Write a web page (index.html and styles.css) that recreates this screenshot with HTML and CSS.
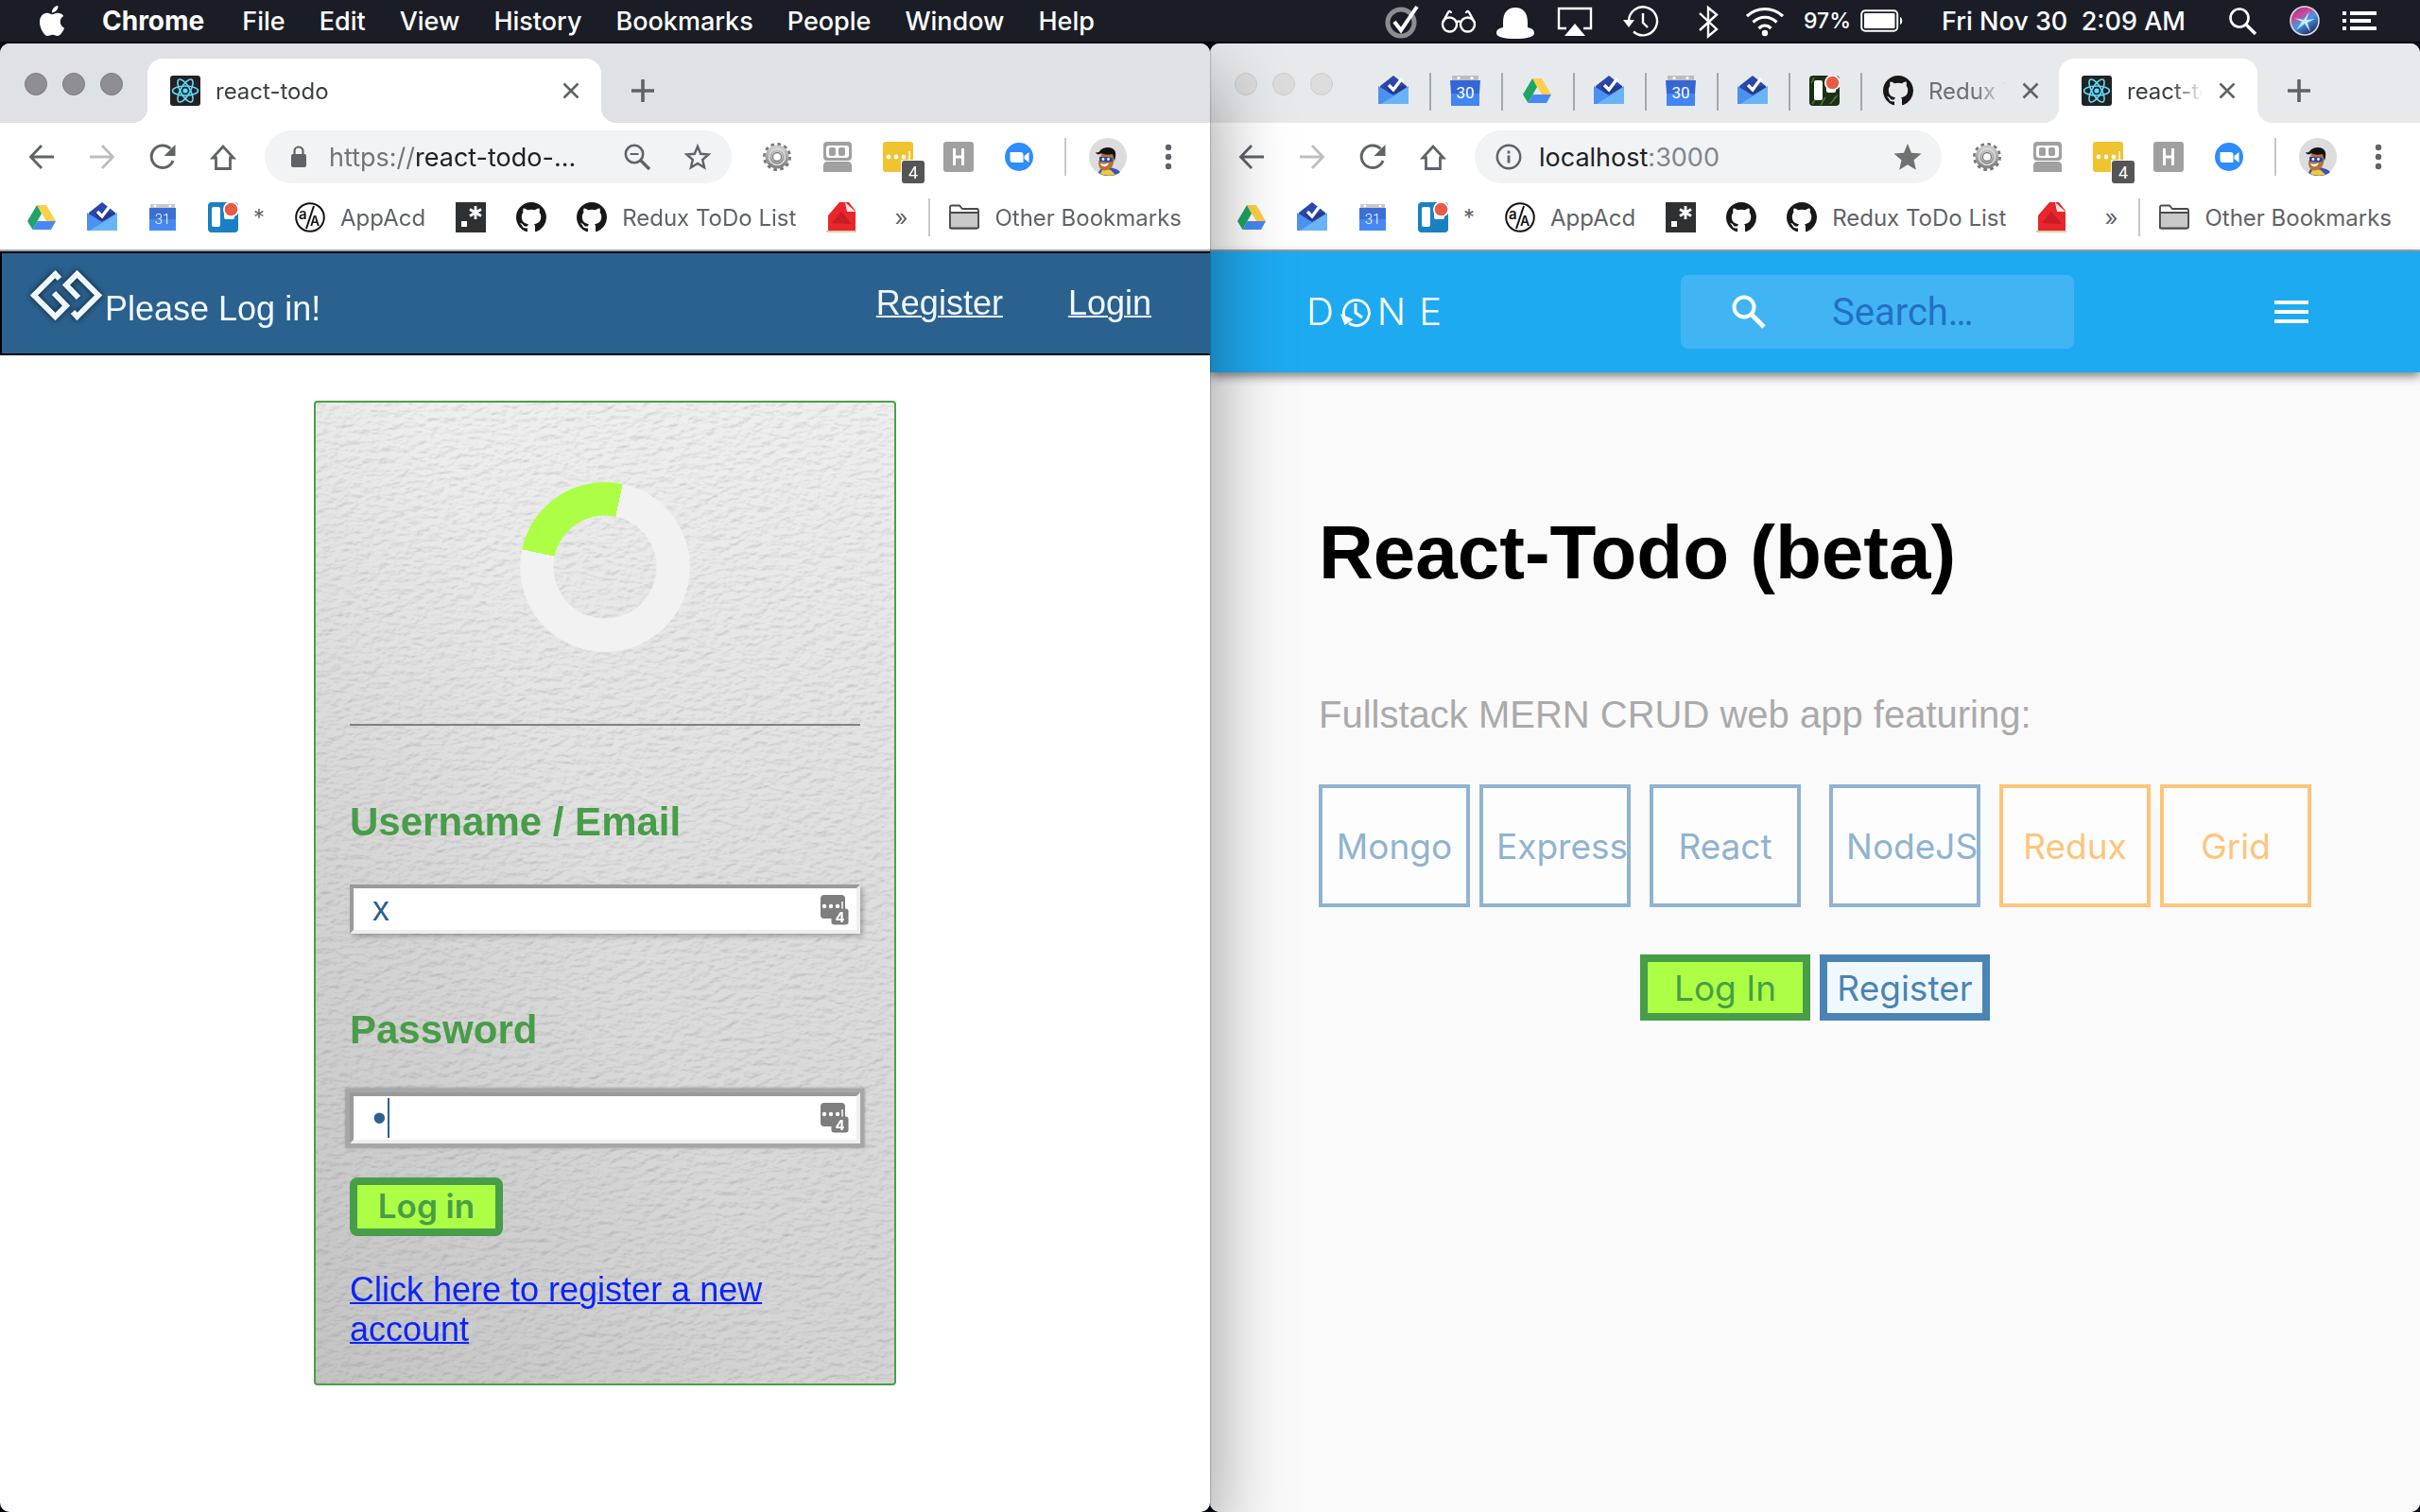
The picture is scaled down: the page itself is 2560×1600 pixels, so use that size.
FILE: index.html
```html
<!DOCTYPE html>
<html lang="en">
<head>
<meta charset="utf-8">
<title>react-todo</title>
<link rel="stylesheet" href="styles.css">
</head>
<body>
<svg class="sprite" aria-hidden="true">
  <defs>
    <filter id="paper" x="0" y="0" width="100%" height="100%">
      <feTurbulence type="fractalNoise" baseFrequency="0.09 0.16" numOctaves="4" seed="7" result="n"/>
      <feDiffuseLighting in="n" surfaceScale="0.9" diffuseConstant="1.18" lighting-color="#fff">
        <feDistantLight azimuth="240" elevation="56"/>
      </feDiffuseLighting>
    </filter>
    <linearGradient id="siri-g" x1="0" y1="0" x2="0.6" y2="1">
      <stop offset="0" stop-color="#5b3fa8"/><stop offset=".35" stop-color="#d8408f"/><stop offset=".6" stop-color="#3f9be8"/><stop offset="1" stop-color="#2b2f6b"/>
    </linearGradient>
    <linearGradient id="gear-g" x1="0" y1="0" x2="0" y2="1"><stop offset="0" stop-color="#c9c9c9"/><stop offset="1" stop-color="#858585"/></linearGradient>
  </defs>
</svg>
<svg class="symbols" aria-hidden="true">
  <symbol id="apple" viewBox="0 0 24 24"><path fill="#fff" d="M12.152 6.896c-.948 0-2.415-1.078-3.96-1.04-2.04.027-3.91 1.183-4.961 3.014-2.117 3.675-.546 9.103 1.519 12.09 1.013 1.454 2.208 3.09 3.792 3.039 1.52-.065 2.09-.987 3.935-.987 1.831 0 2.35.987 3.96.948 1.637-.026 2.676-1.48 3.676-2.948 1.156-1.688 1.636-3.325 1.662-3.415-.039-.013-3.182-1.221-3.22-4.857-.026-3.04 2.48-4.494 2.597-4.559-1.429-2.09-3.623-2.324-4.39-2.376-2-.156-3.675 1.09-4.61 1.09zM15.53 3.83c.843-1.012 1.4-2.427 1.245-3.83-1.207.052-2.662.805-3.532 1.818-.78.896-1.454 2.338-1.273 3.714 1.338.104 2.715-.688 3.559-1.701"/></symbol>
  <symbol id="github" viewBox="0 0 16 16"><path fill="#191717" d="M8 0C3.58 0 0 3.58 0 8c0 3.54 2.29 6.53 5.47 7.59.4.07.55-.17.55-.38 0-.19-.01-.82-.01-1.49-2.01.37-2.53-.49-2.69-.94-.09-.23-.48-.94-.82-1.13-.28-.15-.68-.52-.01-.53.63-.01 1.08.58 1.23.82.72 1.21 1.87.87 2.33.66.07-.52.28-.87.51-1.07-1.78-.2-3.64-.89-3.64-3.95 0-.87.31-1.59.82-2.15-.08-.2-.36-1.02.08-2.12 0 0 .67-.21 2.2.82.64-.18 1.32-.27 2-.27.68 0 1.36.09 2 .27 1.53-1.04 2.2-.82 2.2-.82.44 1.1.16 1.92.08 2.12.51.56.82 1.27.82 2.15 0 3.07-1.87 3.75-3.65 3.95.29.25.54.73.54 1.48 0 1.07-.01 1.93-.01 2.2 0 .21.15.46.55.38A8.013 8.013 0 0016 8c0-4.42-3.58-8-8-8z"/></symbol>
  <symbol id="react" viewBox="0 0 32 32"><rect width="32" height="32" rx="3" fill="#222"/><g fill="none" stroke="#61dafb" stroke-width="1.6"><ellipse cx="16" cy="16" rx="13.5" ry="5"/><ellipse cx="16" cy="16" rx="13.5" ry="5" transform="rotate(60 16 16)"/><ellipse cx="16" cy="16" rx="13.5" ry="5" transform="rotate(120 16 16)"/></g><circle cx="16" cy="16" r="2.6" fill="#61dafb"/></symbol>
  <symbol id="drive" viewBox="0 0 32 32"><path fill="#ffcf48" d="M11 3h10l10 17H21z"/><path fill="#1fa463" d="M11 3l5 9-9.500 17L1 20z"/><path fill="#4688f4" d="M31 20l-5 9H6.500l5-9z"/></symbol>
  <symbol id="inbox" viewBox="0 0 32 32"><path fill="#2a47ae" d="M16 0l14 11v12H2V11z"/><path fill="#253a8e" d="M8 11h22v8H12z"/><path fill="#4b92f0" d="M0 11l16 10 16-10v19H0z"/><path fill="#69b4f5" d="M32 12v18H3z"/><path d="M11 10l5 5 9-12" fill="none" stroke="#fff" stroke-width="3.400"/></symbol>
  <symbol id="cal31" viewBox="0 0 32 32"><rect x="3" y="2" width="26" height="6" fill="#c8c8c8"/><path fill="#3b6fd4" d="M2 6h28v12H2z"/><path fill="#4688f1" d="M2 18h28v12H2z"/><circle cx="8" cy="4" r="1.300" fill="#fff"/><circle cx="24" cy="4" r="1.300" fill="#fff"/><text x="16" y="23" font-family="Roboto" font-weight="300" font-size="15" fill="#fff" text-anchor="middle">31</text></symbol>
  <symbol id="cal30" viewBox="0 0 32 32"><rect x="2" y="0" width="28" height="8" fill="#bdbdbd"/><path fill="#3367d6" d="M0 5h32l-1 14v12H1V19z"/><path fill="#4285f4" d="M1 19h30v13H1z"/><circle cx="9" cy="2.500" r="1.500" fill="#fff"/><circle cx="23" cy="2.500" r="1.500" fill="#fff"/><text x="16" y="24" font-family="Roboto" font-size="17" fill="#fff" text-anchor="middle">30</text></symbol>
  <symbol id="trello" viewBox="0 0 32 32"><rect width="32" height="32" rx="4" fill="#1a80c4"/><rect x="4" y="5" width="9" height="21" rx="2" fill="#fff"/><rect x="17" y="5" width="11" height="13" rx="2" fill="#fff"/><circle cx="24.500" cy="7.500" r="8.500" fill="#fff"/><circle cx="24.500" cy="7.500" r="6.800" fill="#eb5a46"/></symbol>
  <symbol id="trello-dark" viewBox="0 0 32 32"><rect width="32" height="32" rx="4" fill="#1d2f16"/><path d="M3 30l4-6M12 31l5-8M22 30l6-7M26 24l4-3M2 8l3-6" stroke="#4d7434" stroke-width="1.500"/><rect x="5" y="5" width="9" height="21" rx="2" fill="#fff"/><rect x="18" y="5" width="10" height="13" rx="2" fill="#fff"/><circle cx="24.500" cy="7.500" r="8.500" fill="#fff"/><circle cx="24.500" cy="7.500" r="6.800" fill="#eb5a46"/></symbol>
  <symbol id="appacd" viewBox="0 0 32 32"><circle cx="16" cy="16" r="14.800" fill="#fff" stroke="#111" stroke-width="2"/><path d="M20 4l-8 24" stroke="#111" stroke-width="2"/><text x="4" y="18" font-family="Inter" font-weight="600" font-size="15" fill="#111">a</text><text x="16" y="25" font-family="Inter" font-weight="600" font-size="14" fill="#111">A</text></symbol>
  <symbol id="regex" viewBox="0 0 32 32"><rect width="32" height="32" fill="#2d3134"/><rect x="6" y="20" width="6" height="6" fill="#fff"/><path d="M21 4v14M15 7.500l12 7M27 7.500l-12 7" stroke="#fff" stroke-width="2.800"/></symbol>
  <symbol id="redroof" viewBox="0 0 32 32"><path fill="#e8262b" d="M2 14L14 0h10l7 9v21H2z"/><path fill="#c81d22" d="M6 22l10-12 11 13z"/><path fill="#fbe9e7" d="M20 0l11 10h-9z"/><path fill="#dccfa0" d="M0 30h32v2H0z"/></symbol>
  <symbol id="folder" viewBox="0 0 32 32"><path d="M1 28V5c0-1 .5-1.500 1.500-1.500H11l3 3.500h15.500c1 0 1.500.5 1.500 1.500V26c0 1-.5 1.500-1.500 1.500h-27C1.500 27.500 1 27 1 26" fill="#fff" stroke="#4a4a4a" stroke-width="1.800"/><path d="M1 11h30v15c0 1-.5 1.500-1.500 1.500h-27C1.500 27.500 1 27 1 26z" fill="#c8c8c8" stroke="#4a4a4a" stroke-width="1.800"/></symbol>
  <symbol id="back" viewBox="0 0 32 32"><path d="M29 16H5M16 4L4.500 16 16 28" fill="none" stroke="currentColor" stroke-width="2.800"/></symbol>
  <symbol id="forward" viewBox="0 0 32 32"><path d="M3 16h24M16 4l11.500 12L16 28" fill="none" stroke="currentColor" stroke-width="2.800"/></symbol>
  <symbol id="reload" viewBox="0 0 32 32"><path d="M27 20a11.800 11.800 0 1 1-2.500-12.500" fill="none" stroke="currentColor" stroke-width="3"/><path d="M29.500 3v12h-12z" fill="currentColor"/></symbol>
  <symbol id="home" viewBox="0 0 32 32"><path d="M16 5L5 17h3.500v11.500h15V17H27z" fill="none" stroke="currentColor" stroke-width="2.800"/></symbol>
  <symbol id="lock" viewBox="0 0 32 32"><rect x="8" y="13" width="16" height="14" rx="2" fill="currentColor"/><path d="M11.500 14v-4a4.500 4.500 0 0 1 9 0v4" fill="none" stroke="currentColor" stroke-width="2.200"/></symbol>
  <symbol id="info" viewBox="0 0 32 32"><circle cx="16" cy="16" r="12.200" fill="none" stroke="currentColor" stroke-width="2.500"/><path d="M16 14.500v8M16 9.500v3" stroke="currentColor" stroke-width="2.800"/></symbol>
  <symbol id="zoomout" viewBox="0 0 32 32"><circle cx="13" cy="13" r="9.200" fill="none" stroke="currentColor" stroke-width="2.600"/><path d="M19.500 19.500L29 29" stroke="currentColor" stroke-width="3.400"/><path d="M8.500 13h9" stroke="currentColor" stroke-width="2"/></symbol>
  <symbol id="star" viewBox="0 0 32 32"><path d="M16 5l3.200 7.800 8.300.700-6.300 5.500 1.900 8.200L16 22.900l-7.100 4.300 1.900-8.200-6.300-5.500 8.300-.7z" fill="none" stroke="currentColor" stroke-width="2.400"/></symbol>
  <symbol id="star-on" viewBox="0 0 32 32"><path d="M16 2l4 9.700 10.500.900-8 6.900 2.400 10.200L16 24.300l-8.900 5.400 2.400-10.200-8-6.900L12 11.700z" fill="#717171"/></symbol>
  <symbol id="gear" viewBox="0 0 32 32"><circle cx="16" cy="16" r="12.700" fill="none" stroke="#777" stroke-width="4.500" stroke-dasharray="3.400 3.250"/><circle cx="16" cy="16" r="9" fill="none" stroke="url(#gear-g)" stroke-width="7"/><circle cx="16" cy="16" r="8.500" fill="none" stroke="#ddd" stroke-width="1.500"/><circle cx="16" cy="16" r="4.500" fill="#fff" stroke="#777" stroke-width="1.300"/></symbol>
  <symbol id="robot" viewBox="0 0 32 32"><rect x="1" width="30" height="20" rx="4" fill="#a0a0a0"/><rect x="4" y="4" width="24" height="13" rx="3" fill="#fff"/><rect x="7" y="6" width="7" height="9" rx="2" fill="#a0a0a0"/><rect x="17" y="6" width="7" height="9" rx="2" fill="#a0a0a0"/><path d="M1 32v-7c0-2 1.500-4 4-4h22c2.500 0 4 2 4 4v7z" fill="#a0a0a0"/></symbol>
  <symbol id="keeper" viewBox="0 0 48 44"><rect width="32" height="32" rx="3" fill="#f0c330"/><circle cx="6" cy="16" r="2.400" fill="#fff"/><circle cx="14" cy="16" r="2.400" fill="#fff"/><circle cx="22" cy="16" r="2.400" fill="#fff"/><path d="M28 10v11" stroke="#fff" stroke-width="1.500"/><path d="M19 32V19h13v13z" fill="#fff" opacity=".9"/><rect x="20" y="20" width="24" height="24" rx="3" fill="#555"/><text x="32" y="39" font-family="Roboto" font-size="18" fill="#fff" text-anchor="middle">4</text></symbol>
  <symbol id="keeper-field" viewBox="0 0 30 32"><rect width="26" height="25" rx="4" fill="#7d7d7d"/><circle cx="4" cy="12" r="2.200" fill="#fff"/><circle cx="11" cy="12" r="2.200" fill="#fff"/><circle cx="18" cy="12" r="2.200" fill="#fff"/><path d="M23 7v9" stroke="#fff" stroke-width="1.500"/><rect x="11.500" y="14.500" width="18" height="17" rx="3" fill="#7d7d7d"/><text x="20.500" y="29" font-family="Inter" font-weight="700" font-size="15" fill="#fff" text-anchor="middle">4</text></symbol>
  <symbol id="hbox" viewBox="0 0 32 32"><rect width="32" height="32" rx="3" fill="#a0a0a0"/><path d="M11.500 7v18M20.500 7v18M11.500 16h9" stroke="#fff" stroke-width="3"/></symbol>
  <symbol id="zoomus" viewBox="0 0 32 32"><circle cx="16" cy="16" r="15" fill="#2d8cff"/><path fill="#fff" d="M6.500 11h11a3 3 0 0 1 3 3v8h-11a3 3 0 0 1-3-3zM21.500 15l5-4v11l-5-4z"/></symbol>
  <symbol id="avatar" viewBox="0 0 40 40"><circle cx="20" cy="20" r="20" fill="#dcdcdc"/><path d="M10 37c1-4 4-6 9-6s12 2 14 5c-5 5-16 6-23 1z" fill="#3a55b8"/><path d="M12 38l3-6 8 2 5 5c-5 1-11 1-16-1z" fill="#f0c83c"/><path d="M13 15c1-3 5-4 9-3s6 4 5 9-1 11-8 13-9-4-9-8c0-2 1-3 2-4z" fill="#b87333"/><path d="M7 15c2 1 4 0 5-2 4-4 12-4 15 0 2 3 1 8 0 11l-2-7c-4 1-9 1-12-1-2 2-5 2-6-1z" fill="#111"/><path d="M11 20c5 0 10 0 14 1v4c-5 1-10 0-14 0z" fill="#2747b0"/><circle cx="15" cy="22.500" r="1.400" fill="#fff"/><circle cx="20.500" cy="22.500" r="1.400" fill="#fff"/><path d="M12 27c3 1 6 1 9-1-1 5-7 6-9 1z" fill="#fff"/></symbol>
  <symbol id="dots" viewBox="0 0 32 32"><g fill="currentColor"><circle cx="16" cy="6" r="3.200"/><circle cx="16" cy="16" r="3.200"/><circle cx="16" cy="26" r="3.200"/></g></symbol>
  <symbol id="cross" viewBox="0 0 20 20"><path d="M2.500 2.500l15 15M17.500 2.500l-15 15" stroke="currentColor" stroke-width="2.600"/></symbol>
  <symbol id="plus" viewBox="0 0 24 24"><path d="M12 0v24M0 12h24" stroke="currentColor" stroke-width="3.600"/></symbol>
</svg>

<header class="menubar">
  <nav class="menus" aria-label="Application menu">
    <svg class="apple"><use href="#apple"/></svg>
    <b>Chrome</b><span>File</span><span>Edit</span><span>View</span><span>History</span><span>Bookmarks</span><span>People</span><span>Window</span><span>Help</span>
  </nav>
  <div class="status">
    <svg class="st" viewBox="0 0 40 40"><circle cx="19" cy="22" r="14" fill="none" stroke="#8b8d93" stroke-width="5"/><path d="M12 21l7 9L36 5" fill="none" stroke="#fff" stroke-width="4"/></svg>
    <svg class="st" viewBox="0 0 40 40" fill="none" stroke="#fff" stroke-width="2.400"><circle cx="10.500" cy="24" r="7.500"/><circle cx="29.500" cy="24" r="7.500"/><path d="M17 22c2-2 4-2 6 0M3 22l6-11c1-2 3-1 3 1M37 22l-6-11c-1-2-3-1-3 1"/></svg>
    <svg class="st" viewBox="0 0 40 40" fill="#fff"><path d="M7 27V22C7 11 12 6 20 6s13 5 13 16v5c5 1 7 3 7 6 0 4-8 6-20 6S0 37 0 33c0-3 2-5 7-6z"/></svg>
    <svg class="st w46" viewBox="0 0 46 40"><path d="M14 28H6V7h34v21h-8" fill="none" stroke="#fff" stroke-width="2.400"/><path d="M23 23l11 13H12z" fill="#fff"/></svg>
    <svg class="st w58" viewBox="0 0 58 40"><path d="M14 20a15 15 0 1 1 5 11.500" fill="none" stroke="#fff" stroke-width="2.400"/><path d="M8 19h12l-6 8z" fill="#fff"/><path d="M29 12v10l5 5" fill="none" stroke="#fff" stroke-width="2.400"/></svg>
    <svg class="st" viewBox="0 0 40 40"><path d="M11 12l18 17-9 7.500V6l9 7.500L11 30" fill="none" stroke="#fff" stroke-width="2.400"/></svg>
    <svg class="st" viewBox="0 0 40 40" fill="none" stroke="#fff" stroke-width="3.200"><path d="M1 15c11-10 27-10 38 0M7.500 21.500c7-7 18-7 25 0M13.500 28c4-4 9-4 13 0"/><circle cx="20" cy="33" r="1.600" fill="#fff"/></svg>
    <span class="pct">97%</span>
    <svg class="battery" viewBox="0 0 46 24"><rect x="1.200" y="1.200" width="38" height="21.600" rx="4" fill="none" stroke="#fff" stroke-width="2"/><rect x="4" y="4" width="32.500" height="16" rx="1" fill="#fff"/><path d="M42 8c3 1 3 7 0 8z" fill="#fff"/></svg>
    <time class="clock">Fri Nov 30&nbsp; 2:09 AM</time>
    <svg class="spot" viewBox="0 0 30 30" fill="none" stroke="#fff"><circle cx="12" cy="12" r="9.500" stroke-width="2.600"/><path d="M18.500 18.500L29 29" stroke-width="3.400"/></svg>
    <svg class="siri" viewBox="0 0 32 32"><circle cx="16" cy="16" r="15" fill="url(#siri-g)" stroke="#ddd" stroke-width="1.600"/><path d="M5 13l10 2 6-9-3 9 9-1-8 4 3 10-6-9-9 7 6-9z" fill="#dff6ff" opacity=".85"/></svg>
    <svg class="list" viewBox="0 0 36 24" fill="#fff"><path d="M0 2h4v4H0zM0 10h4v4H0zM0 18h4v4H0zM8 2h28v4H8zM8 10h22v4H8zM8 18h28v4H8z"/></svg>
  </div>
</header>

<div class="desktop">
  <section class="window front" aria-label="react-todo">
    <div class="tabstrip">
      <div class="lights"><i></i><i></i><i></i></div>
      <div class="tab active wide">
        <svg class="ico"><use href="#react"/></svg><span class="title">react-todo</span>
        <button class="x" aria-label="Close tab"><svg><use href="#cross"/></svg></button>
      </div>
      <button class="newtab" aria-label="New tab"><svg><use href="#plus"/></svg></button>
    </div>
    <div class="toolbar">
      <button aria-label="Back"><svg class="ico"><use href="#back"/></svg></button>
      <button class="off" aria-label="Forward"><svg class="ico"><use href="#forward"/></svg></button>
      <button aria-label="Reload"><svg class="ico"><use href="#reload"/></svg></button>
      <button aria-label="Home"><svg class="ico"><use href="#home"/></svg></button>
      <div class="omnibox">
        <svg class="ico"><use href="#lock"/></svg>
        <span class="url"><span class="dim">https://</span>react-todo-...</span>
        <button aria-label="Zoom"><svg class="ico"><use href="#zoomout"/></svg></button>
        <button aria-label="Bookmark this page"><svg class="ico"><use href="#star"/></svg></button>
      </div>
      <button aria-label="Settings extension"><svg class="ico"><use href="#gear"/></svg></button>
      <button aria-label="Robot extension"><svg class="ico"><use href="#robot"/></svg></button>
      <button class="badged" aria-label="Passwords"><svg class="keeper"><use href="#keeper"/></svg></button>
      <button aria-label="H extension"><svg class="ico"><use href="#hbox"/></svg></button>
      <button aria-label="Zoom meetings"><svg class="ico"><use href="#zoomus"/></svg></button>
      <span class="rule"></span>
      <button aria-label="Profile"><svg class="face"><use href="#avatar"/></svg></button>
      <button aria-label="Menu"><svg class="ico"><use href="#dots"/></svg></button>
    </div>
    <nav class="bookmarks" aria-label="Bookmarks">
      <a href="#"><svg class="ico"><use href="#drive"/></svg></a>
      <a href="#"><svg class="ico"><use href="#inbox"/></svg></a>
      <a href="#"><svg class="ico"><use href="#cal31"/></svg></a>
      <a href="#"><svg class="ico"><use href="#trello"/></svg>*</a>
      <a href="#"><svg class="ico"><use href="#appacd"/></svg>AppAcd</a>
      <a href="#"><svg class="ico"><use href="#regex"/></svg></a>
      <a href="#"><svg class="ico"><use href="#github"/></svg></a>
      <a href="#"><svg class="ico"><use href="#github"/></svg>Redux ToDo List</a>
      <a href="#"><svg class="ico"><use href="#redroof"/></svg></a>
      <button class="more" aria-label="More bookmarks">»</button>
      <a class="other" href="#"><svg class="ico"><use href="#folder"/></svg>Other Bookmarks</a>
    </nav>
    <main class="page login-page">
      <header class="site-bar">
        <svg class="brand" viewBox="0 0 80 58" fill="none" stroke="#f0f8ff" stroke-width="6"><path d="M33 11l-4.500-5L6 28.500 28.500 51 40 39.500 27 26"/><path d="M47 46l4.500 5L74 28.500 51.500 6 40 17.500 53 31"/></svg>
        <span class="greeting">Please Log in!</span>
        <nav class="site-links"><a href="#">Register</a><a href="#">Login</a></nav>
      </header>
      <form class="card">
        <svg class="paper" aria-hidden="true"><rect width="100%" height="100%" filter="url(#paper)"/></svg>
        <div class="spinner" role="progressbar" aria-label="Loading"></div>
        <hr>
        <label for="user">Username / Email</label>
        <div class="field"><input id="user" type="text" value="x"><svg class="fill"><use href="#keeper-field"/></svg></div>
        <label for="pass">Password</label>
        <div class="field"><input id="pass" class="focused" type="password" value="a"><i class="caret"></i><svg class="fill"><use href="#keeper-field"/></svg></div>
        <button class="submit" type="button">Log in</button>
        <a class="signup" href="#">Click here to register a new account</a>
      </form>
    </main>
  </section>

  <section class="window back" aria-label="localhost:3000">
    <div class="tabstrip">
      <div class="lights"><i></i><i></i><i></i></div>
      <div class="pinned">
        <span><svg class="ico"><use href="#inbox"/></svg></span>
        <span><svg class="ico"><use href="#cal30"/></svg></span>
        <span><svg class="ico"><use href="#drive"/></svg></span>
        <span><svg class="ico"><use href="#inbox"/></svg></span>
        <span><svg class="ico"><use href="#cal30"/></svg></span>
        <span><svg class="ico"><use href="#inbox"/></svg></span>
        <span><svg class="ico"><use href="#trello-dark"/></svg></span>
      </div>
      <div class="tab idle">
        <svg class="ico"><use href="#github"/></svg><span class="title">Redux ToDo List</span>
        <button class="x" aria-label="Close tab"><svg><use href="#cross"/></svg></button>
      </div>
      <div class="tab active narrow">
        <svg class="ico"><use href="#react"/></svg><span class="title">react-todo</span>
        <button class="x" aria-label="Close tab"><svg><use href="#cross"/></svg></button>
      </div>
      <button class="newtab" aria-label="New tab"><svg><use href="#plus"/></svg></button>
    </div>
    <div class="toolbar">
      <button aria-label="Back"><svg class="ico"><use href="#back"/></svg></button>
      <button class="off" aria-label="Forward"><svg class="ico"><use href="#forward"/></svg></button>
      <button aria-label="Reload"><svg class="ico"><use href="#reload"/></svg></button>
      <button aria-label="Home"><svg class="ico"><use href="#home"/></svg></button>
      <div class="omnibox">
        <svg class="ico"><use href="#info"/></svg>
        <span class="url">localhost<span class="port">:3000</span></span>
        <button aria-label="Bookmarked"><svg class="ico"><use href="#star-on"/></svg></button>
      </div>
      <button aria-label="Settings extension"><svg class="ico"><use href="#gear"/></svg></button>
      <button aria-label="Robot extension"><svg class="ico"><use href="#robot"/></svg></button>
      <button class="badged" aria-label="Passwords"><svg class="keeper"><use href="#keeper"/></svg></button>
      <button aria-label="H extension"><svg class="ico"><use href="#hbox"/></svg></button>
      <button aria-label="Zoom meetings"><svg class="ico"><use href="#zoomus"/></svg></button>
      <span class="rule"></span>
      <button aria-label="Profile"><svg class="face"><use href="#avatar"/></svg></button>
      <button aria-label="Menu"><svg class="ico"><use href="#dots"/></svg></button>
    </div>
    <nav class="bookmarks" aria-label="Bookmarks">
      <a href="#"><svg class="ico"><use href="#drive"/></svg></a>
      <a href="#"><svg class="ico"><use href="#inbox"/></svg></a>
      <a href="#"><svg class="ico"><use href="#cal31"/></svg></a>
      <a href="#"><svg class="ico"><use href="#trello"/></svg>*</a>
      <a href="#"><svg class="ico"><use href="#appacd"/></svg>AppAcd</a>
      <a href="#"><svg class="ico"><use href="#regex"/></svg></a>
      <a href="#"><svg class="ico"><use href="#github"/></svg></a>
      <a href="#"><svg class="ico"><use href="#github"/></svg>Redux ToDo List</a>
      <a href="#"><svg class="ico"><use href="#redroof"/></svg></a>
      <button class="more" aria-label="More bookmarks">»</button>
      <a class="other" href="#"><svg class="ico"><use href="#folder"/></svg>Other Bookmarks</a>
    </nav>
    <main class="page done-page">
      <header class="app-bar">
        <div class="done-logo" aria-label="Done"><span>D</span><svg viewBox="0 0 34 34"><path d="M5 22A13.500 13.500 0 1 1 10 29" fill="none" stroke="#fff" stroke-width="2.800"/><path d="M1 19l4.500 12 9-6z" fill="#fff"/><path d="M17 8v10l7 5" fill="none" stroke="#fff" stroke-width="3"/></svg><span>N</span><span>E</span></div>
        <label class="search"><svg viewBox="0 0 36 36" fill="none" stroke="#fff"><circle cx="13" cy="13" r="10.500" stroke-width="4"/><path d="M21 21l13 13" stroke-width="5"/></svg><input type="search" placeholder="Search…" aria-label="Search"></label>
        <button class="burger" aria-label="Open menu"><i></i><i></i><i></i></button>
      </header>
      <div class="intro">
        <h1>React-Todo (beta)</h1>
        <p>Fullstack MERN CRUD web app featuring:</p>
        <ul class="stack">
          <li>Mongo</li><li>Express</li><li class="react">React</li><li class="node">NodeJS</li><li class="extra redux">Redux</li><li class="extra">Grid</li>
        </ul>
        <div class="actions"><button class="go">Log In</button><button class="join">Register</button></div>
      </div>
    </main>
  </section>
</div>
</body>
</html>
```
FILE: styles.css
```css
* { box-sizing: border-box; }
html, body { height: 100%; }
body {
  margin: 0;
  display: flex;
  flex-direction: column;
  background: #070a12;
  font-family: Inter, Roboto, sans-serif;
  overflow: hidden;
}
button { margin: 0; padding: 0; border: 0; background: none; font: inherit; color: inherit; }
svg { display: block; flex: none; }
.sprite { position: absolute; width: 0; height: 0; }
.symbols { display: none; }
.ico { width: 32px; height: 32px; }

/* system menu bar */
.menubar {
  position: relative;
  z-index: 3;
  display: flex;
  justify-content: space-between;
  flex: none;
  height: 46px;
  padding: 0 46px 0 39px;
  background: #1a1d26;
  border-bottom: 2px solid #04060c;
  color: #fff;
  font-size: 27px;
  font-weight: 500;
}
.menus { display: flex; align-items: center; gap: 36px; }
.menus b { margin-right: 4px; font-size: 28px; font-weight: 700; }
.apple { width: 32px; height: 32px; margin-right: 1px; }
.status { display: flex; align-items: center; gap: 20px; }
.st { width: 40px; height: 40px; }
.w46 { width: 46px; }
.w58 { width: 58px; }
.pct { font-size: 23px; width: 51px; text-align: right; }
.battery { width: 46px; height: 24px; margin-left: -10px; }
.clock { width: 259px; margin: 0 24px 0 20px; white-space: nowrap; }
.spot { width: 30px; height: 30px; margin-right: 15px; }
.siri { width: 32px; height: 32px; margin-right: 4px; }
.list { width: 36px; height: 24px; }

/* browser windows */
.desktop { flex: 1; display: grid; grid-template-columns: 1fr 1fr; min-height: 0; }
.window { display: flex; flex-direction: column; min-width: 0; border-radius: 10px; background: #fff; overflow: hidden; }
.front { position: relative; z-index: 2; box-shadow: 0 0 2px rgba(0, 0, 0, .6), 0 36px 84px rgba(0, 0, 0, .42); }
.tabstrip { display: flex; align-items: flex-end; height: 84px; background: #dee1e6; color: #5f6368; }
.back .tabstrip { background: #e7eaed; }
.lights { display: flex; gap: 16px; padding: 0 26px 29px; }
.lights i { width: 24px; height: 24px; border-radius: 50%; background: #8f8e92; border: 1px solid #7b7a7e; }
.back .lights i { background: #dcdcdc; border-color: #cbcbcb; }
.tab { position: relative; display: flex; align-items: center; height: 68px; padding: 0 22px 0 24px; font-size: 24px; }
.tab .title { flex: 1; min-width: 0; margin-left: 16px; overflow: hidden; white-space: nowrap; }
.tab.active { background: #fff; border-radius: 16px 16px 0 0; color: #3c4043; }
.tab.active::before, .tab.active::after { content: ""; position: absolute; bottom: 0; width: 16px; height: 16px; }
.tab.active::before { right: 100%; background: radial-gradient(circle at 0 0, transparent 16px, #fff 16px); }
.tab.active::after { left: 100%; background: radial-gradient(circle at 100% 0, transparent 16px, #fff 16px); }
.wide { width: 480px; }
.narrow, .idle { width: 210px; }
.tab.idle { padding-right: 20px; }
.idle .title, .narrow .title { margin-right: 16px; -webkit-mask-image: linear-gradient(90deg, #000 60%, transparent); mask-image: linear-gradient(90deg, #000 60%, transparent); }
.idle .title { color: #6b6f74; }
.x { color: #5f6368; }
.x svg { width: 20px; height: 20px; }
.newtab { height: 68px; margin-left: 32px; color: #5f6368; }
.newtab svg { width: 24px; height: 24px; }
.pinned { display: flex; }
.pinned span { display: flex; align-items: center; justify-content: center; width: 76px; height: 68px; position: relative; }
.pinned span::after { content: ""; position: absolute; right: -2px; top: 15px; width: 2px; height: 40px; background: #a4a8ac; }

.toolbar { display: flex; align-items: center; padding: 8px 12px 10px; color: #5f6368; }
.toolbar button { width: 64px; height: 54px; display: flex; align-items: center; justify-content: center; }
.toolbar .off { color: #bcbec1; }
.omnibox { flex: 1; display: flex; align-items: center; height: 56px; margin: 0 16px 0 12px; padding: 0 4px 0 20px; border-radius: 28px; background: #f1f3f4; }
.url { flex: 1; margin-left: 16px; font-size: 27px; color: #202124; white-space: nowrap; }
.dim { color: #70757a; }
.port { color: #80868b; }
.toolbar .badged { justify-content: flex-start; align-items: flex-start; padding: 11px 0 0 16px; }
.keeper { width: 48px; height: 44px; }
.rule { width: 2px; height: 40px; margin: 0 12px 0 16px; background: #c6c8ca; }
.face { width: 40px; height: 40px; }

.bookmarks { display: flex; align-items: center; height: 62px; padding: 0 14px 8px 12px; border-bottom: 2px solid #a3a6a9; font-size: 24px; color: #5f6368; }
.bookmarks a { display: flex; align-items: center; gap: 16px; padding: 0 16px; color: inherit; text-decoration: none; white-space: nowrap; }
.more { margin-left: auto; padding: 0 22px; }
.other { border-left: 2px solid #c6c8ca; }
.bookmarks .other { padding-left: 20px; height: 40px; }

/* pages */
.page { flex: 1; min-height: 0; font-family: "Liberation Sans", Arial, sans-serif; }
.site-bar { display: flex; align-items: flex-start; height: 110px; padding: 16px 62px 0 28px; border: 2px solid #000; border-right: 0; background: #2b618e; color: #f0f8ff; font-size: 36px; line-height: 42px; }
.brand { width: 80px; height: 58px; margin-right: 1px; filter: drop-shadow(0 0 3px #0b1d2e); }
.greeting { margin-top: 22px; }
.site-links { display: flex; gap: 69px; margin: 16px 0 0 auto; }
.site-links a { color: inherit; text-decoration-thickness: 2px; }

.card {
  position: relative;
  display: flex;
  flex-direction: column;
  width: 616px;
  margin: 48px auto 0;
  padding: 84px 36px 36px;
  border: 2px solid #48a048;
  border-radius: 4px;
  overflow: hidden;
  background: linear-gradient(70deg, rgba(110, 110, 110, .16), transparent 50%), linear-gradient(#efefef, #dedede 50%, #d4d4d4);
}
.card > * { position: relative; }
.card .paper { position: absolute; inset: 0; width: 100%; height: 100%; mix-blend-mode: multiply; }
.spinner {
  align-self: center;
  width: 180px;
  height: 180px;
  border-radius: 50%;
  background: conic-gradient(from -78deg, #adff45 90deg, #f2f2f2 0);
  -webkit-mask-image: radial-gradient(circle, transparent 54px, #000 55px);
  mask-image: radial-gradient(circle, transparent 54px, #000 55px);
}
.card hr { width: 100%; height: 2px; margin: 76px 0 0; border: 0; background: #808080; }
.card label { margin: 78px 0 42px; font-size: 42px; line-height: 48px; font-weight: 700; color: #489d48; }
.field input {
  display: block;
  width: 100%;
  height: 52px;
  padding: 0 52px 0 20px;
  border: 4px solid;
  border-color: #9a9a9a #eee #eee #9a9a9a;
  background: #fff;
  box-shadow: 3px 3px 5px rgba(0, 0, 0, .25);
  color: #2b618e;
  font: 36px "Liberation Sans", Arial, sans-serif;
  outline: 0;
}
.field .focused { height: 54px; font-size: 42px; box-shadow: 0 0 0 4px #a5a6a8, 0 0 2px 5px rgba(130, 130, 130, .6); }
.caret { position: absolute; left: 40px; top: 6px; width: 2px; height: 42px; background: #2b618e; }
.fill { position: absolute; right: 12px; top: 11px; width: 30px; height: 32px; }
.submit { align-self: flex-start; width: 162px; height: 62px; margin-top: 36px; padding-bottom: 3px; border: 8px solid #489d48; border-radius: 8px; background: #adff45; color: #489d48; font: 600 35px/40px Inter, Roboto, sans-serif; }
.signup { margin-top: 36px; font-size: 36px; line-height: 42px; color: #0b24fb; text-decoration-thickness: 2px; }

.done-page { background: #fafafa; }
.app-bar { position: relative; display: flex; align-items: center; height: 128px; padding: 0 118px 0 102px; background: #1eaaf1; box-shadow: 0 4px 10px rgba(0, 0, 0, .5); color: #fff; }
.done-logo { display: flex; align-items: center; font: 300 40px/46px Inter, Roboto, sans-serif; }
.done-logo svg { width: 34px; height: 34px; margin: 0 6px; }
.done-logo span + span { margin-left: 14px; }
.search { display: flex; align-items: center; width: 416px; height: 78px; margin: 0 212px 0 auto; padding: 0 20px 0 54px; border-radius: 8px; background: #41b5f3; }
.search svg { width: 36px; height: 36px; }
.search input { flex: 1; min-width: 0; margin-left: 70px; padding: 0; border: 0; background: none; font: 40px Roboto, sans-serif; color: #fff; outline: 0; }
.search input::placeholder { color: #2470c4; opacity: 1; }
.burger { display: grid; gap: 6px; width: 36px; }
.burger i { height: 4px; background: #fff; }

.intro { width: 1050px; margin: 145px auto 0; }
.intro h1 { margin: 0; font-size: 80px; line-height: 92px; color: #000; }
.intro p { margin: 102px 0 51px; font-size: 40px; line-height: 46px; color: #aaa; }
.stack { display: flex; gap: 10px; margin: 0; padding: 0; list-style: none; }
.stack li { display: flex; align-items: center; justify-content: safe center; width: 160px; height: 130px; padding: 0 14px; border: 4px solid #90b3d0; background: #fdfdfd; color: #90b3d0; font: 37px Inter, Roboto, sans-serif; }
.stack .react, .stack .redux { margin-left: 10px; }
.stack .node { margin-left: 20px; }
.stack .extra { border-color: #fdc57c; color: #fdc57c; }
.actions { display: flex; justify-content: center; gap: 10px; margin-top: 50px; }
.actions button { display: flex; align-items: center; justify-content: safe center; width: 180px; height: 70px; padding: 0 10px; border: 8px solid; font: 37px Inter, Roboto, sans-serif; }
.actions .go { border-color: #489d48; background: #adff45; color: #489d48; }
.actions .join { border-color: #4a84b4; background: #f0f8ff; color: #4a84b4; }
```
